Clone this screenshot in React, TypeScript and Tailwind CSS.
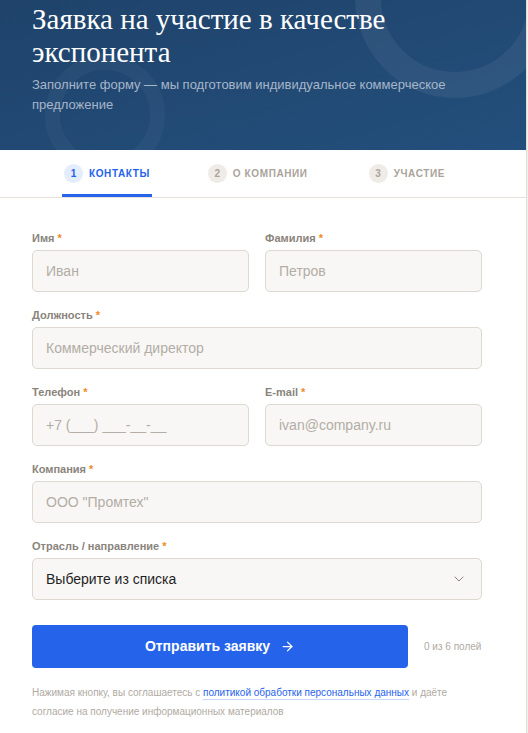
import { ArrowRight, ChevronDown } from "lucide-react";

function Label({ text }: { text: string }) {
  return (
    <div className="mb-[5px] h-[14px] text-[11px] leading-[14px] font-bold text-[#8a847c]">
      {text} <span className="text-[#f08a24]">*</span>
    </div>
  );
}

function Field({ label, placeholder }: { label: string; placeholder: string }) {
  return (
    <div className="flex flex-col">
      <Label text={label} />
      <div className="flex h-[42px] items-center rounded-[5px] border border-[#ddd8d0] bg-[#f8f7f5] px-[13px] text-[14px] text-[#b3ada5]">
        {placeholder}
      </div>
    </div>
  );
}

const steps = [
  { n: 1, title: "Контакты", active: true },
  { n: 2, title: "О компании", active: false },
  { n: 3, title: "Участие", active: false },
];

export default function App() {
  return (
    <div className="min-h-screen bg-[#f3f1ed] font-['Liberation_Sans',Arial,sans-serif]">
      <div className="w-[527px] border-r border-[#e2ded7] bg-white">
        {/* Header */}
        <div className="relative h-[150px] overflow-hidden bg-gradient-to-br from-[#1f436b] to-[#234f7c] px-8 pt-[3px]">
          <div className="absolute -top-[102px] left-[355px] h-[200px] w-[200px] rounded-full border-[26px] border-white/[0.06]" />
          <div className="absolute top-[55px] left-[45px] h-[120px] w-[120px] rounded-full border-[15px] border-white/[0.035]" />
          <h1 className="relative font-['Liberation_Serif',serif] text-[29px] leading-[33px] text-white">
            Заявка на участие в качестве экспонента
          </h1>
          <p className="relative mt-[6px] text-[13px] leading-[20px] text-[#a8b6c9]">
            Заполните форму — мы подготовим индивидуальное коммерческое предложение
          </p>
        </div>

        {/* Steps */}
        <div className="flex h-[48px] gap-[54px] border-b border-[#e5e1da] pl-[62px]">
          {steps.map((s) => (
            <div
              key={s.n}
              className={`flex items-center gap-[6px] border-b-[3px] px-[2px] pt-[3px] ${
                s.active ? "border-[#2563eb]" : "border-transparent"
              } ${s.n === 3 ? "ml-[3px]" : ""}`}
            >
              <span
                className={`flex h-[19px] w-[19px] items-center justify-center rounded-full text-[10px] font-bold ${
                  s.active ? "bg-[#e4edfc] text-[#2563eb]" : "bg-[#efece7] text-[#aaa49b]"
                }`}
              >
                {s.n}
              </span>
              <span
                className={`text-[10px] font-bold uppercase tracking-[0.06em] ${
                  s.active ? "text-[#2563eb]" : "text-[#aaa49b]"
                }`}
              >
                {s.title}
              </span>
            </div>
          ))}
        </div>

        {/* Form */}
        <div className="pt-[33px] pr-[44px] pl-8 pb-[16px]">
          <div className="flex flex-col gap-[16px]">
            <div className="grid grid-cols-2 gap-4">
              <Field label="Имя" placeholder="Иван" />
              <Field label="Фамилия" placeholder="Петров" />
            </div>
            <Field label="Должность" placeholder="Коммерческий директор" />
            <div className="grid grid-cols-2 gap-4">
              <Field label="Телефон" placeholder="+7 (___) ___-__-__" />
              <Field label="E-mail" placeholder="ivan@company.ru" />
            </div>
            <Field label="Компания" placeholder='ООО "Промтех"' />
            <div className="flex flex-col">
              <Label text="Отрасль / направление" />
              <div className="flex h-[42px] items-center justify-between rounded-[5px] border border-[#ddd8d0] bg-[#f8f7f5] pr-[14px] pl-[13px] text-[14px] text-[#1f1f1f]">
                Выберите из списка
                <ChevronDown size={16} strokeWidth={1.5} className="text-[#8a847c]" />
              </div>
            </div>
          </div>

          <div className="mt-[25px] flex items-center gap-4">
            <button className="flex h-[43px] w-[376px] items-center justify-center gap-[10px] rounded-[4px] bg-[#2563eb] text-[14px] font-bold text-white">
              Отправить заявку
              <ArrowRight size={15} strokeWidth={2} />
            </button>
            <span className="text-[10px] text-[#b0aaa2]">0 из 6 полей</span>
          </div>

          <p className="mt-[15px] text-[10px] leading-[19px] text-[#b0aaa2]">
            Нажимая кнопку, вы соглашаетесь с{" "}
            <a className="text-[#2563eb] underline decoration-[#c7d8fb] underline-offset-[3px]">
              политикой обработки персональных данных
            </a>{" "}
            и даёте согласие на получение информационных материалов
          </p>
        </div>
      </div>
    </div>
  );
}
